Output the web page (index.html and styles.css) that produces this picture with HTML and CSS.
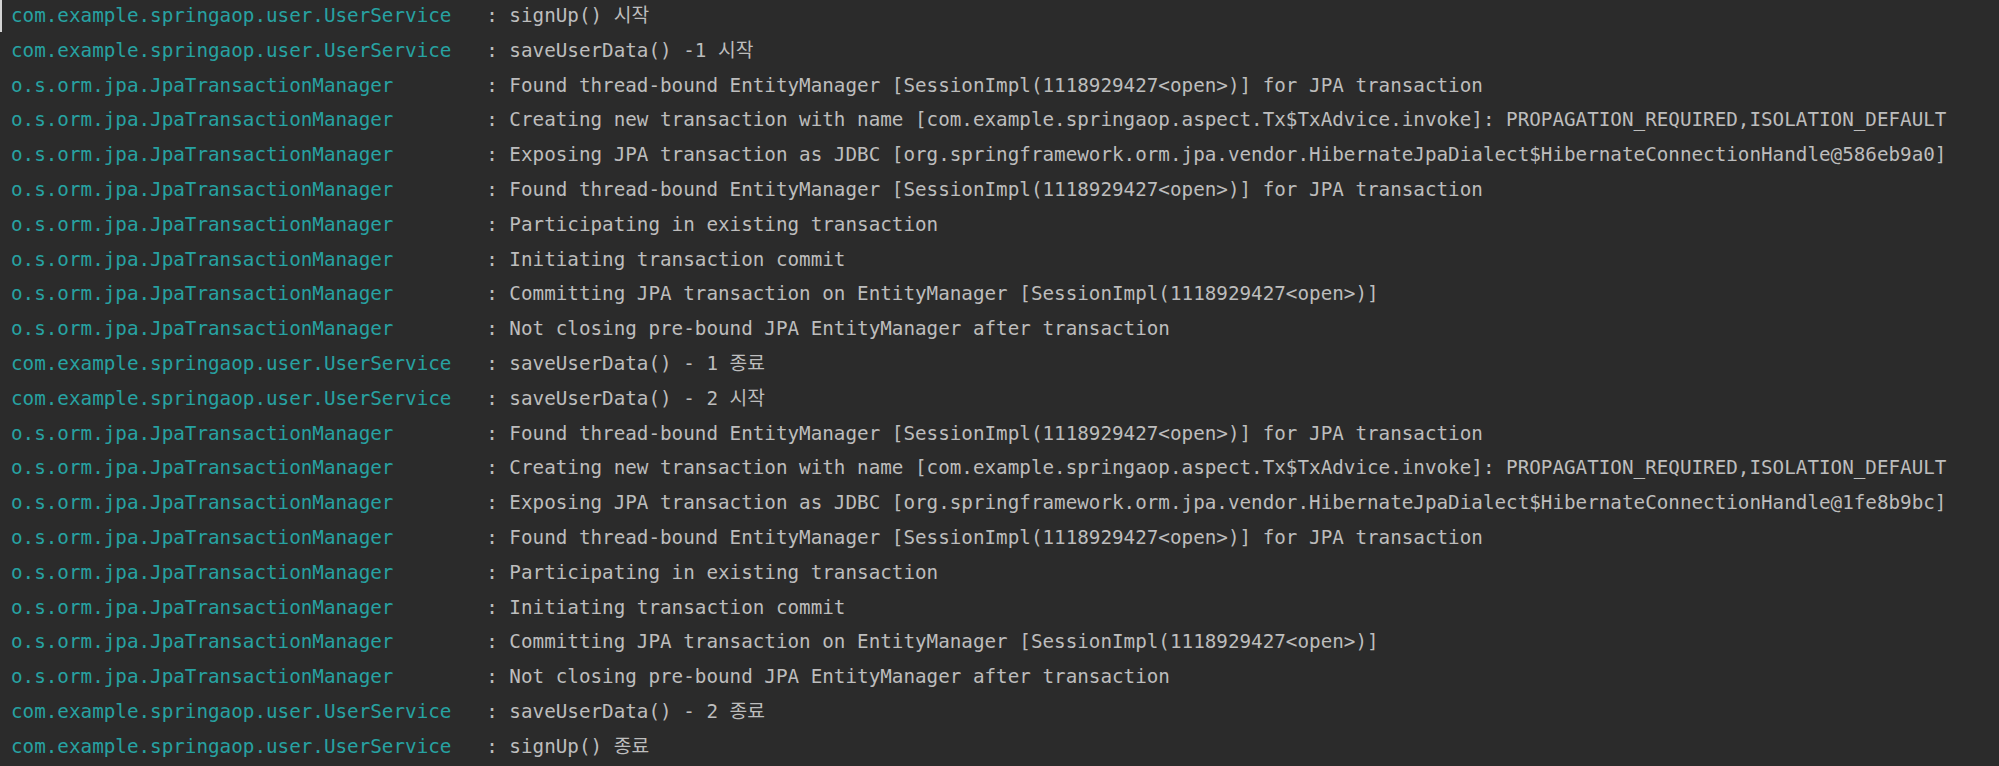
FILE: index.html
```html
<!DOCTYPE html>
<html lang="ko">
<head>
<meta charset="utf-8">
<link rel="stylesheet" href="styles.css">
</head>
<body>
<div class="console">
<div class="line first"><span class="logger">com.example.springaop.user.UserService  </span><span class="msg"> : signUp() 시작</span></div>
<div class="line"><span class="logger">com.example.springaop.user.UserService  </span><span class="msg"> : saveUserData() -1 시작</span></div>
<div class="line"><span class="logger">o.s.orm.jpa.JpaTransactionManager       </span><span class="msg"> : Found thread-bound EntityManager [SessionImpl(1118929427&lt;open&gt;)] for JPA transaction</span></div>
<div class="line"><span class="logger">o.s.orm.jpa.JpaTransactionManager       </span><span class="msg"> : Creating new transaction with name [com.example.springaop.aspect.Tx$TxAdvice.invoke]: PROPAGATION_REQUIRED,ISOLATION_DEFAULT</span></div>
<div class="line"><span class="logger">o.s.orm.jpa.JpaTransactionManager       </span><span class="msg"> : Exposing JPA transaction as JDBC [org.springframework.orm.jpa.vendor.HibernateJpaDialect$HibernateConnectionHandle@586eb9a0]</span></div>
<div class="line"><span class="logger">o.s.orm.jpa.JpaTransactionManager       </span><span class="msg"> : Found thread-bound EntityManager [SessionImpl(1118929427&lt;open&gt;)] for JPA transaction</span></div>
<div class="line"><span class="logger">o.s.orm.jpa.JpaTransactionManager       </span><span class="msg"> : Participating in existing transaction</span></div>
<div class="line"><span class="logger">o.s.orm.jpa.JpaTransactionManager       </span><span class="msg"> : Initiating transaction commit</span></div>
<div class="line"><span class="logger">o.s.orm.jpa.JpaTransactionManager       </span><span class="msg"> : Committing JPA transaction on EntityManager [SessionImpl(1118929427&lt;open&gt;)]</span></div>
<div class="line"><span class="logger">o.s.orm.jpa.JpaTransactionManager       </span><span class="msg"> : Not closing pre-bound JPA EntityManager after transaction</span></div>
<div class="line"><span class="logger">com.example.springaop.user.UserService  </span><span class="msg"> : saveUserData() - 1 종료</span></div>
<div class="line"><span class="logger">com.example.springaop.user.UserService  </span><span class="msg"> : saveUserData() - 2 시작</span></div>
<div class="line"><span class="logger">o.s.orm.jpa.JpaTransactionManager       </span><span class="msg"> : Found thread-bound EntityManager [SessionImpl(1118929427&lt;open&gt;)] for JPA transaction</span></div>
<div class="line"><span class="logger">o.s.orm.jpa.JpaTransactionManager       </span><span class="msg"> : Creating new transaction with name [com.example.springaop.aspect.Tx$TxAdvice.invoke]: PROPAGATION_REQUIRED,ISOLATION_DEFAULT</span></div>
<div class="line"><span class="logger">o.s.orm.jpa.JpaTransactionManager       </span><span class="msg"> : Exposing JPA transaction as JDBC [org.springframework.orm.jpa.vendor.HibernateJpaDialect$HibernateConnectionHandle@1fe8b9bc]</span></div>
<div class="line"><span class="logger">o.s.orm.jpa.JpaTransactionManager       </span><span class="msg"> : Found thread-bound EntityManager [SessionImpl(1118929427&lt;open&gt;)] for JPA transaction</span></div>
<div class="line"><span class="logger">o.s.orm.jpa.JpaTransactionManager       </span><span class="msg"> : Participating in existing transaction</span></div>
<div class="line"><span class="logger">o.s.orm.jpa.JpaTransactionManager       </span><span class="msg"> : Initiating transaction commit</span></div>
<div class="line"><span class="logger">o.s.orm.jpa.JpaTransactionManager       </span><span class="msg"> : Committing JPA transaction on EntityManager [SessionImpl(1118929427&lt;open&gt;)]</span></div>
<div class="line"><span class="logger">o.s.orm.jpa.JpaTransactionManager       </span><span class="msg"> : Not closing pre-bound JPA EntityManager after transaction</span></div>
<div class="line"><span class="logger">com.example.springaop.user.UserService  </span><span class="msg"> : saveUserData() - 2 종료</span></div>
<div class="line"><span class="logger">com.example.springaop.user.UserService  </span><span class="msg"> : signUp() 종료</span></div>
</div>
</body>
</html>
```

FILE: styles.css
```css
html, body {
  margin: 0;
  padding: 0;
  background: #2b2b2b;
  height: 100%;
  overflow: hidden;
}
.console {
  padding: 0 0 0 11px;
  margin-top: -1px;
  font-family: "DejaVu Sans Mono", "Noto Sans CJK KR", monospace;
  font-size: 19.25px;
  line-height: 34.8px;
}
.line {
  position: relative;
  height: 34.8px;
  white-space: pre;
}
.first::before {
  content: "";
  position: absolute;
  left: -11px;
  top: 1px;
  width: 2px;
  height: 32px;
  background: #d4d4d4;
}
.logger {
  color: #27a2a2;
}
.msg {
  color: #bdbdbd;
}
```
